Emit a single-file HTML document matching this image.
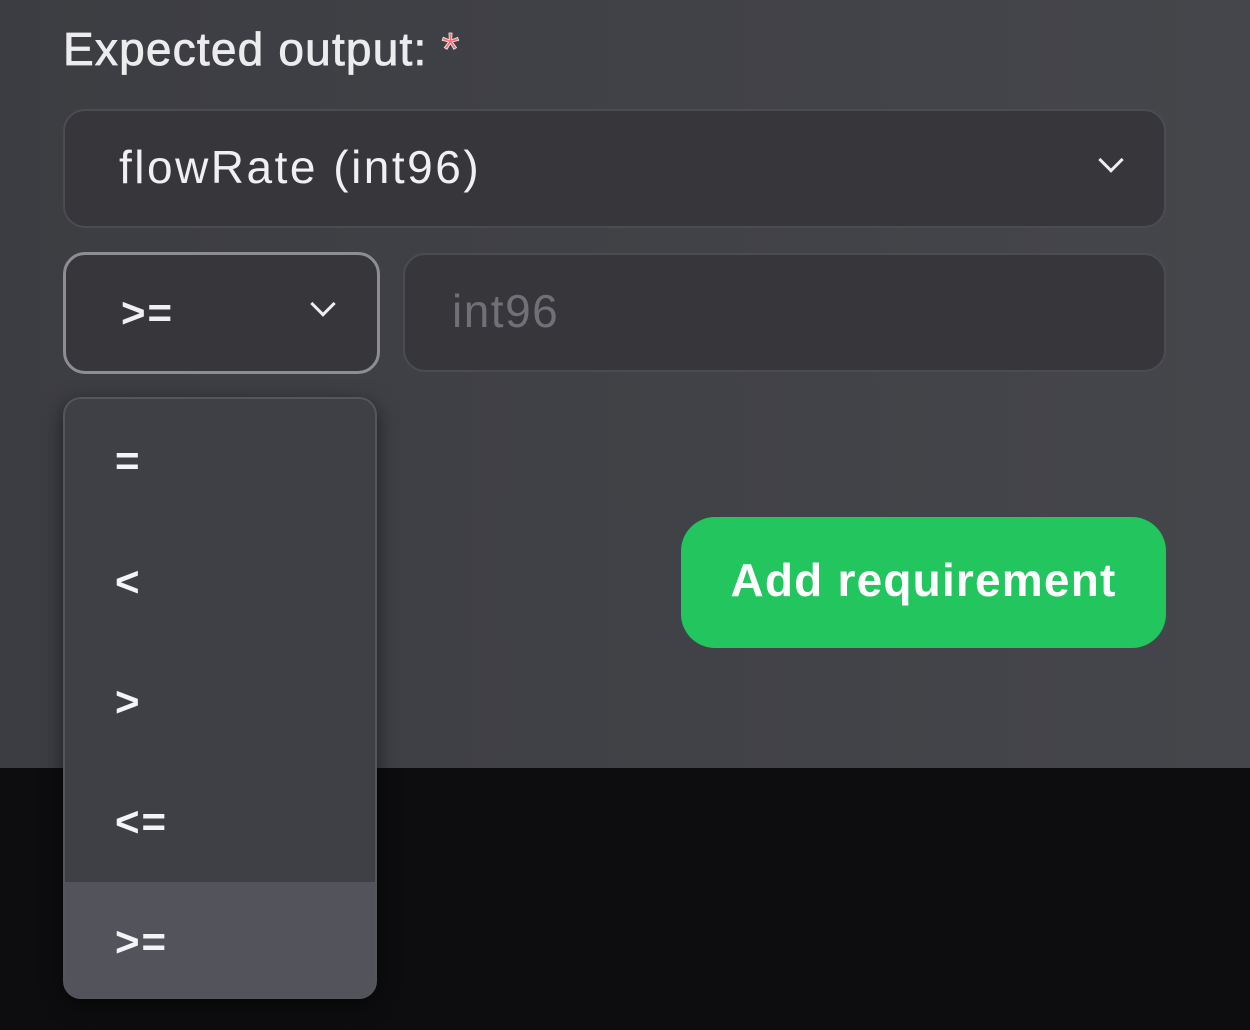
<!DOCTYPE html><html><head><style>
body{margin:0;width:1250px;height:1030px;overflow:hidden;font-family:"Liberation Sans",sans-serif;background:#0d0d0f;position:relative}
.panel{position:absolute;left:0;top:0;width:1250px;height:768px;background:linear-gradient(90deg,#3c3d42,#45464b)}
.lbl{position:absolute;left:63px;top:22px;font-size:46px;color:#ececee;letter-spacing:1.2px;-webkit-text-stroke:0.8px #ececee}
.lbl span{color:#f87171}
.box{position:absolute;box-sizing:border-box;background:#36363b;border:2px solid #4b4c52;border-radius:22px;font-size:46px;color:#f0f0f2;display:flex;align-items:center}
.chev{position:absolute;width:15px;height:15px;border-right:3.5px solid #eee;border-bottom:3.5px solid #eee;transform:rotate(45deg)}
.dd{position:absolute;left:63px;top:397px;width:314px;height:602px;box-sizing:border-box;background:#3f4046;border:2px solid #55565c;border-radius:18px;overflow:hidden;box-shadow:0 6px 20px rgba(0,0,0,.5)}
.it{height:120px;display:flex;align-items:center;padding-left:50px;font-size:42px;font-weight:bold;color:#f4f4f6;letter-spacing:2px}
.btn{position:absolute;left:681px;top:517px;width:485px;height:131px;background:#22c55e;border-radius:34px;color:#fff;font-size:46px;font-weight:bold;display:flex;align-items:center;justify-content:center;letter-spacing:1.2px;padding-bottom:6px;box-sizing:border-box}
</style></head><body>
<div class="panel"></div>
<div class="lbl">Expected output: <span>*</span></div>
<div class="box" style="left:63px;top:109px;width:1103px;height:119px;padding-left:54px;letter-spacing:2.5px;padding-bottom:4px">flowRate (int96)<div class="chev" style="left:1037px;top:40px"></div></div>
<div class="box" style="left:63px;top:252px;width:317px;height:122px;border:3px solid #8d8e93;padding-left:55px;font-weight:bold;font-size:42px;letter-spacing:2px">&gt;=<div class="chev" style="left:248px;top:40px"></div></div>
<div class="box" style="left:403px;top:253px;width:763px;height:119px;padding-left:47px;color:#707176;letter-spacing:1.5px;padding-bottom:4px">int96</div>
<div class="btn">Add requirement</div>
<div class="dd">
<div class="it" style="height:123px">=</div>
<div class="it">&lt;</div>
<div class="it">&gt;</div>
<div class="it">&lt;=</div>
<div class="it" style="background:#52535b">&gt;=</div>
</div>
</body></html>
